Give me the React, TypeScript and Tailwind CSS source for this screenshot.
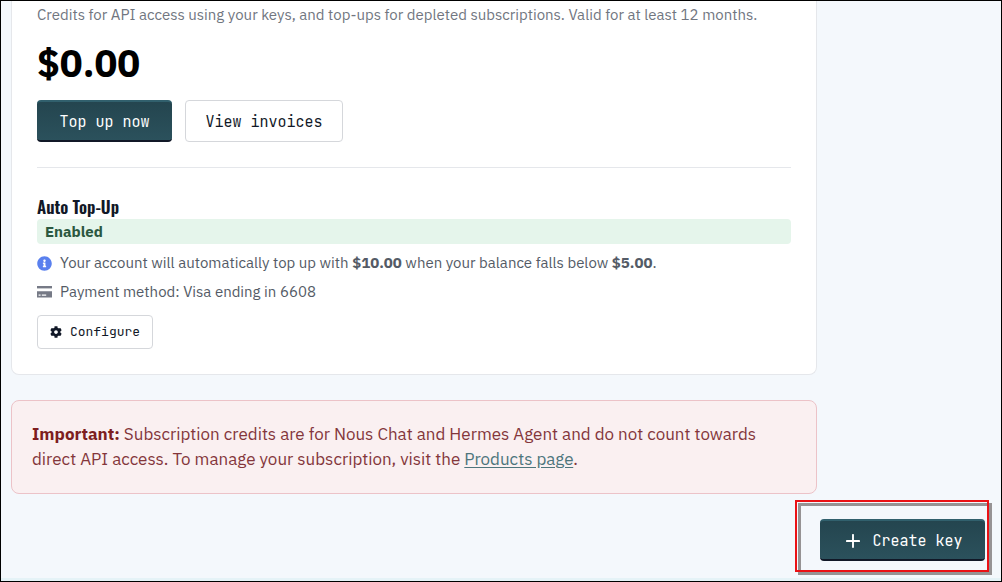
import React from "react";
import { FaCog, FaInfoCircle } from "react-icons/fa";

function CardIcon() {
  return (
    <svg viewBox="0 0 15 12" className="h-3 w-[15px] shrink-0" fill="#767a86" aria-hidden="true">
      <path d="M0 0h15v2.4H0z" />
      <path fillRule="evenodd" d="M0 5.2h15v6.2H0zM1.6 8.4v1.4h2V8.4zM4.8 8.4v1.4h4.4V8.4z" />
    </svg>
  );
}

function PlusIcon() {
  return (
    <svg viewBox="0 0 14 14" className="size-[14px] shrink-0" stroke="currentColor" strokeWidth="1.9" strokeLinecap="round" aria-hidden="true">
      <path d="M7 0.9v12.2M0.9 7h12.2" />
    </svg>
  );
}

const mono = "font-['JetBrains_Mono','DejaVu_Sans_Mono',monospace]";
const primary =
  "h-[42px] rounded-[4px] border-t-2 border-b-2 border-t-[#31606d] border-b-[#111827] bg-linear-to-b from-[#24454f] to-[#2b515c] pt-0.5 text-[15px] text-white";
const secondary = "rounded-[4px] border border-[#d5d7db] bg-white text-[#111827]";

export default function App() {
  return (
    <div className="flex min-h-screen flex-col border border-black bg-[#f4f8fc] font-['IBM_Plex_Sans','Roboto',sans-serif]">
      <main className="flex-1 pl-[10px] pr-[184px]">
        <section className="rounded-b-[8px] border border-t-0 border-[#e5e7eb] bg-white px-[25px] pb-[25px]">
          <p className="pt-1 text-[15px] leading-5 text-[#71767f]">
            Credits for API access using your keys, and top-ups for depleted subscriptions. Valid for at least 12 months.
          </p>
          <p className="pt-4 text-[38px] font-bold leading-[44px] text-black">$0.00</p>
          <div className="flex gap-[13px] pt-[15px]">
            <button type="button" className={`${mono} ${primary} w-[135px]`}>Top up now</button>
            <button type="button" className={`${mono} ${secondary} h-[42px] w-[158px] pt-0.5 text-[15px]`}>View invoices</button>
          </div>
          <hr className="mt-[25px] border-[#e5e7eb]" />
          <h3 className="pt-[27px] font-['Oswald','Roboto',sans-serif] text-[17px] font-semibold leading-6 text-[#111827]">
            Auto Top-Up
          </h3>
          <div className="h-[25px] rounded-[4px] bg-[#e5f5eb] px-2 text-[15px] font-bold leading-[26px] text-[#2b5840]">
            Enabled
          </div>
          <div className="flex items-center gap-2 pt-[9px] text-[15px] leading-5 text-[#545b66]">
            <FaInfoCircle className="size-[15px] shrink-0 text-[#5a80ee]" aria-hidden="true" />
            <p>
              Your account will automatically top up with <b>$10.00</b> when your balance falls below <b>$5.00</b>.
            </p>
          </div>
          <div className="flex items-center gap-2 pt-[9px] text-[15px] leading-5 text-[#545b66]">
            <CardIcon />
            <p>Payment method: Visa ending in 6608</p>
          </div>
          <button
            type="button"
            className={`${mono} ${secondary} mt-[13px] flex h-[34px] w-[116px] items-center justify-center gap-2 text-[13px]`}
          >
            <FaCog className="size-3 shrink-0" aria-hidden="true" />
            Configure
          </button>
        </section>
        <section className="mt-[25px] rounded-[8px] border border-[#ecc3c8] bg-[#faf0f1] py-[21px] pl-5 pr-9 text-[17px] leading-[25px] text-[#84363b]">
          <p>
            <b className="text-[#7d1e20]">Important:</b> Subscription credits are for Nous Chat and Hermes Agent and do not count towards direct API access. To manage your subscription, visit the{" "}
            <a href="#products" className="text-[#4d757c] underline underline-offset-2">Products page</a>.
          </p>
        </section>
      </main>
      <footer className="flex justify-end border-b-3 border-[#e5f3f7] pb-[17px] pr-4 pt-[25px]">
        <div className="relative">
          <button type="button" className={`${mono} ${primary} flex w-[165px] items-center justify-center gap-3 pl-1`}>
            <PlusIcon />
            Create key
          </button>
          <div className="pointer-events-none absolute -bottom-[14px] -left-[22px] -right-[7px] -top-[16px] border-3 border-[#969394]" />
          <div className="pointer-events-none absolute -bottom-[11px] -left-[25px] -right-1 -top-[19px] border-2 border-[#ea1115]" />
        </div>
      </footer>
    </div>
  );
}
